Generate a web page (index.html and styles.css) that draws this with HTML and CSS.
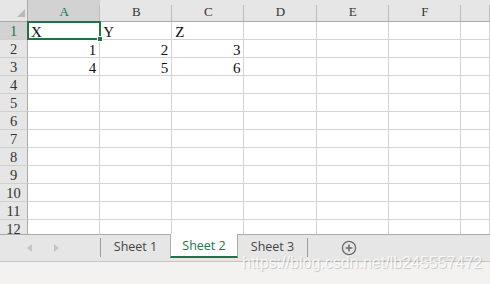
FILE: index.html
```html
<!DOCTYPE html>
<html lang="en">

<head>
    <meta charset="UTF-8" />
    <meta name="viewport" content="width=device-width, initial-scale=1.0" />
    <title>Workbook</title>
    <link rel="stylesheet" href="styles.css">
</head>

<body>
    <div class="sheet">
        <div class="grid">
            <div class="corner"><span class="corner-mark"></span></div>
            <div class="col-head active">A</div><div class="col-head">B</div><div class="col-head">C</div><div class="col-head">D</div><div class="col-head">E</div><div class="col-head">F</div><div class="col-head"></div>

            <div class="row-head active">1</div><div class="cell">X</div><div class="cell">Y</div><div class="cell">Z</div><div class="cell"></div><div class="cell"></div><div class="cell"></div><div class="cell"></div>
            <div class="row-head">2</div><div class="cell num">1</div><div class="cell num">2</div><div class="cell num">3</div><div class="cell"></div><div class="cell"></div><div class="cell"></div><div class="cell"></div>
            <div class="row-head">3</div><div class="cell num">4</div><div class="cell num">5</div><div class="cell num">6</div><div class="cell"></div><div class="cell"></div><div class="cell"></div><div class="cell"></div>
            <div class="row-head">4</div><div class="cell"></div><div class="cell"></div><div class="cell"></div><div class="cell"></div><div class="cell"></div><div class="cell"></div><div class="cell"></div>
            <div class="row-head">5</div><div class="cell"></div><div class="cell"></div><div class="cell"></div><div class="cell"></div><div class="cell"></div><div class="cell"></div><div class="cell"></div>
            <div class="row-head">6</div><div class="cell"></div><div class="cell"></div><div class="cell"></div><div class="cell"></div><div class="cell"></div><div class="cell"></div><div class="cell"></div>
            <div class="row-head">7</div><div class="cell"></div><div class="cell"></div><div class="cell"></div><div class="cell"></div><div class="cell"></div><div class="cell"></div><div class="cell"></div>
            <div class="row-head">8</div><div class="cell"></div><div class="cell"></div><div class="cell"></div><div class="cell"></div><div class="cell"></div><div class="cell"></div><div class="cell"></div>
            <div class="row-head">9</div><div class="cell"></div><div class="cell"></div><div class="cell"></div><div class="cell"></div><div class="cell"></div><div class="cell"></div><div class="cell"></div>
            <div class="row-head">10</div><div class="cell"></div><div class="cell"></div><div class="cell"></div><div class="cell"></div><div class="cell"></div><div class="cell"></div><div class="cell"></div>
            <div class="row-head">11</div><div class="cell"></div><div class="cell"></div><div class="cell"></div><div class="cell"></div><div class="cell"></div><div class="cell"></div><div class="cell"></div>
            <div class="row-head">12</div><div class="cell"></div><div class="cell"></div><div class="cell"></div><div class="cell"></div><div class="cell"></div><div class="cell"></div><div class="cell"></div>
        </div>
        <!-- active cell A1 -->
        <div class="selection"><span class="fill-handle"></span></div>
    </div>

    <div class="tabbar">
        <div class="tab-nav">
            <span class="arrow arrow-left"></span>
            <span class="arrow arrow-right"></span>
        </div>
        <span class="tab-sep"></span>
        <div class="tab">Sheet 1</div>
        <div class="tab active">Sheet 2</div>
        <div class="tab">Sheet 3</div>
        <span class="tab-sep"></span>
        <div class="add-sheet">
            <svg width="16" height="16" viewBox="0 0 16 16">
                <circle cx="8" cy="8" r="6.6" fill="none" stroke="#6a6a6a" stroke-width="1.3" />
                <path d="M8 4.6v6.8M4.6 8h6.8" stroke="#6a6a6a" stroke-width="1.6" />
            </svg>
        </div>
    </div>

    <div class="statusbar"></div>
    <span class="watermark">https://blog.csdn.net/lb245557472</span>
</body>

</html>
```

FILE: styles.css
```css
body {
    margin: 0;
    width: 490px;
    height: 284px;
    overflow: hidden;
    background-color: #f3f2f1;
    font-family: "Liberation Serif", serif;
    position: relative;
}

.sheet {
    position: relative;
    height: 234px;
    overflow: hidden;
    background-color: #fff;
}

.grid {
    display: grid;
    grid-template-columns: 28px repeat(6, 72.17px) 1fr;
    grid-template-rows: 22px;
    grid-auto-rows: 18px;
}

.corner {
    background-color: #e6e6e6;
    border-right: 1px solid #ababab;
    border-bottom: 1px solid #ababab;
    box-sizing: border-box;
    display: flex;
    justify-content: flex-end;
    align-items: flex-end;
    padding: 0 2px 4px 0;
}

.corner-mark {
    width: 0;
    height: 0;
    border-left: 8px solid transparent;
    border-bottom: 8px solid #b9b9b9;
}

.col-head {
    position: relative;
    background-color: #e6e6e6;
    border-bottom: 1px solid #ababab;
    box-sizing: border-box;
    color: #333;
    font-size: 13px;
    line-height: 24px;
    text-align: center;
}

.col-head::after {
    content: "";
    position: absolute;
    right: 0;
    top: 5px;
    bottom: 0;
    width: 1px;
    background-color: #bdbdbd;
}

.row-head {
    background-color: #e6e6e6;
    border-right: 1px solid #ababab;
    border-bottom: 1px solid #cfcfcf;
    box-sizing: border-box;
    color: #333;
    font-size: 14.5px;
    line-height: 19px;
    text-align: center;
}

.col-head.active,
.row-head.active {
    background-color: #d2d2d2;
    color: #217346;
}

.cell {
    border-right: 1px solid #d4d4d4;
    border-bottom: 1px solid #d4d4d4;
    box-sizing: border-box;
    padding: 0 3px;
    color: #111;
    font-size: 15px;
    line-height: 20px;
}

.num {
    text-align: right;
}

.selection {
    position: absolute;
    left: 27px;
    top: 21px;
    width: 74px;
    height: 19px;
    border: 2px solid #217346;
    box-sizing: border-box;
}

.fill-handle {
    position: absolute;
    right: -4px;
    bottom: -4px;
    width: 4px;
    height: 4px;
    background-color: #217346;
    border: 1px solid #fff;
}

.tabbar {
    height: 28px;
    box-sizing: border-box;
    background-color: #e6e6e6;
    border-top: 1px solid #ababab;
    border-bottom: 1px solid #c6c6c6;
    display: flex;
    font-family: "Open Sans", sans-serif;
    font-size: 12.5px;
    color: #444;
}

.tab-nav {
    width: 100px;
    display: flex;
    align-items: center;
    gap: 22px;
    padding-left: 27px;
    box-sizing: border-box;
}

.arrow {
    width: 0;
    height: 0;
    border-top: 4px solid transparent;
    border-bottom: 4px solid transparent;
}

.arrow-left {
    border-right: 5px solid #c4c4c4;
}

.arrow-right {
    border-left: 5px solid #c4c4c4;
}

.tab-sep {
    width: 1px;
    height: 19px;
    margin-top: 3px;
    background-color: #9a9a9a;
}

.tab {
    width: 69px;
    height: 23px;
    box-sizing: border-box;
    display: flex;
    align-items: center;
    justify-content: center;
}

.tab.active {
    width: 68px;
    height: 24px;
    margin-top: -1px;
    background-color: #fff;
    border-left: 1px solid #ababab;
    border-right: 1px solid #ababab;
    border-bottom: 2px solid #217346;
    color: #217346;
    padding-top: 1px;
}

.add-sheet {
    width: 82px;
    display: flex;
    align-items: center;
    justify-content: center;
    padding-bottom: 1px;
}

.statusbar {
    height: 22px;
    background-color: #f3f2f1;
}

.watermark {
    position: absolute;
    left: 242px;
    top: 254px;
    font-family: "Liberation Sans", Arial, sans-serif;
    font-size: 16px;
    color: rgba(255, 255, 255, 0.8);
    text-shadow: 1px 1px 1px rgba(0, 0, 0, 0.18);
    white-space: nowrap;
}
```
